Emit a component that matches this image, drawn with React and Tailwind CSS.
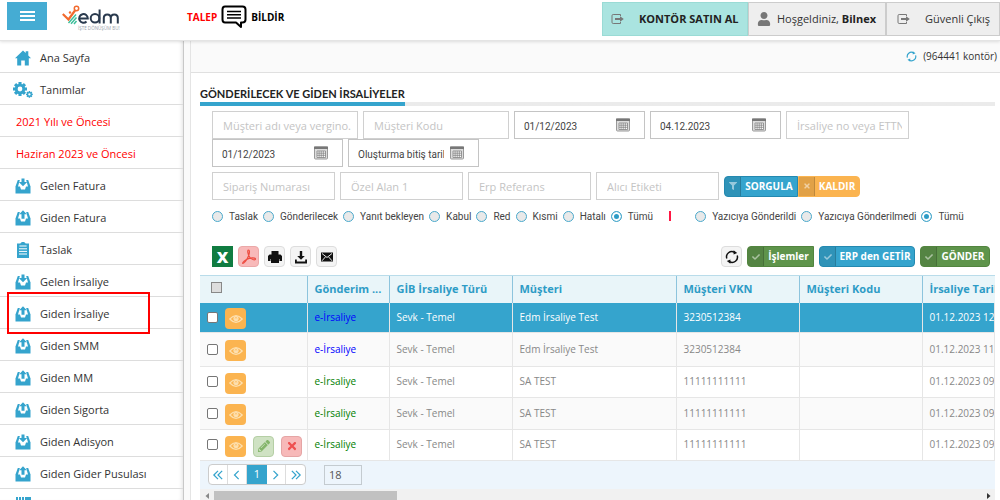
import { useState } from 'react';
import clsx from 'clsx';
import { FaPencilAlt, FaFilter, FaUser, FaCheck, FaTimes } from 'react-icons/fa';

const HomeIcon = () => (
  <svg viewBox="0 0 16 16" className="size-4" fill="#35a4cd">
    <path d="M8 0.5 0 8.2h2.2V15.5h4V10.5h3.6v5h4V8.2H16L13.3 5.6V1.2h-2.6v1.9z" />
  </svg>
);

const Gear = ({ cx, cy, r }) => (
  <g transform={`translate(${cx} ${cy})`}>
    {[0, 45, 90, 135].map((a) => (
      <rect key={a} x={-r * 0.22} y={-r} width={r * 0.44} height={r * 2} transform={`rotate(${a})`} />
    ))}
    <circle r={r * 0.74} />
    <circle r={r * 0.34} fill="#fff" />
  </g>
);

const GearsIcon = () => (
  <svg viewBox="0 0 20 16" className="h-4 w-5" fill="#35a4cd">
    <Gear cx={7} cy={7} r={7} />
    <Gear cx={16.4} cy={12.4} r={3.4} />
  </svg>
);

const TrayIcon = ({ up }) => (
  <svg viewBox="0 0 16 16" className="size-4">
    <path d="M2.8 2h10.400L15.500 8.500v7H.5v-7z" fill="#35a4cd" />
    <path d="M5 1.500h6L13 8.500h-2L10 11.500H6L5 8.500H3z" fill="#fff" />
    {up ? (
      <path d="M8 .2 11.800 4.200H9.500v4.500h-3V4.200H4.200z" fill="#35a4cd" />
    ) : (
      <path d="M6.500.5h3v3.500h2.700L8 8.300 3.800 4h2.700z" fill="#35a4cd" />
    )}
  </svg>
);

const ClipboardIcon = () => (
  <svg viewBox="0 0 16 16" className="size-4">
    <path d="M2 1.6h3.4C5.6.6 6.6 0 8 0s2.4.6 2.6 1.6H14V16H2z" fill="#35a4cd" />
    <path d="M4.4 4h7.2M4 6.8h8M4 9.4h8M4 12h8" stroke="#fff" strokeWidth="1" />
  </svg>
);

const BarcodeIcon = () => (
  <svg viewBox="0 0 16 16" className="size-4">
    <path d="M1 1.5h10" stroke="#35a4cd" strokeWidth="3" strokeDasharray="2 1" />
    <path d="M11 0h5v15H1V8h10z" fill="#35a4cd" />
  </svg>
);

const CalendarIcon = () => (
  <svg viewBox="0 0 14 14" className="size-3.5">
    <rect x="0.5" y="1" width="13" height="12" rx="1" fill="#ddd" stroke="#999" />
    <rect x="0" y="0.5" width="14" height="2.5" fill="#777" />
    <path d="M3 5h8.5v6.5H3zM3 7.2h8.5M3 9.3h8.5M5.1 5v6.5M7.2 5v6.5M9.3 5v6.5" fill="#fff" stroke="#777" strokeWidth="0.7" />
  </svg>
);

const ExitIcon = () => (
  <svg viewBox="0 0 14 12" className="h-3 w-3.5" fill="none" stroke="#777">
    <path d="M9.5 3V1.5H2.2Q1 1.5 1 2.7v6.6q0 1.2 1.2 1.2h7.3V9" />
    <path d="M4 5h5V3.2L12.8 6 9 8.8V7H4z" fill="#777" stroke="none" />
  </svg>
);

const RefreshIcon = ({ className }) => (
  <svg viewBox="0 0 14 14" className={className} fill="none" stroke="currentColor" strokeWidth="1.5">
    <path d="M1.8 8.5A5.3 5.3 0 0 1 9.5 2.3M12.2 5.5a5.3 5.3 0 0 1-7.7 6.2" />
    <path d="M8.6.2 12.2 3 8.6 4.6zM5.4 13.8 1.8 11l3.6-1.6z" fill="currentColor" stroke="none" />
  </svg>
);

const EyeIcon = () => (
  <svg viewBox="0 0 14 10" className="h-2.5 w-3.5" fill="none" stroke="#fde0b0">
    <path d="M.8 5Q7-1.8 13.2 5 7 11.8.8 5z" strokeWidth="1.2" />
    <circle cx="7" cy="4.6" r="2.6" fill="#fde0b0" stroke="none" />
    <path d="M5.8 4.4Q7 2.4 8.2 4.4" stroke="#fbb450" strokeWidth="0.8" />
  </svg>
);

const PdfIcon = () => (
  <svg viewBox="0 0 16 16" className="size-4" fill="none" stroke="#ee4b3f" strokeWidth="1.2">
    <path d="M7.5 1C6 1 7 6 9 8.5s5.5 3 5.5 1.5S9 8.5 5.5 10.5 1 14.5 2 14.5 6 11 7.5 7 8.5 1 7.5 1z" />
  </svg>
);

const PrinterIcon = () => (
  <svg viewBox="0 0 14 12" className="h-3 w-3.5" fill="currentColor">
    <path d="M3.5 0h7v4h-7z" />
    <path d="M1.5 3.5h11L14 5v5h-2.5V8h-9v2H0V5z" />
    <path d="M3 8h8v4H3z" />
  </svg>
);

const DownloadIcon = () => (
  <svg viewBox="0 0 14 14" className="size-3.5" fill="currentColor">
    <path d="M5.8 1h2.4v5h2.6L7 9.8 3.2 6h2.6zM1 9.5h1.8v2h8.4v-2H13v4H1z" />
  </svg>
);

const MailIcon = () => (
  <svg viewBox="0 0 14 10" className="h-2.5 w-3.5">
    <rect x="1" y="0.5" width="12" height="9" fill="#111" />
    <path d="m2 1.5 5 4 5-4M2 8.8l3.5-4M12 8.8l-3.5-4" fill="none" stroke="#fff" strokeWidth="0.9" />
  </svg>
);

const Logo = () => (
  <svg viewBox="0 0 60 27" className="h-[27px] w-[60px]">
    <path d="M.8 10 6.5 15.5 13 6.5" fill="none" stroke="#f26a2e" strokeWidth="2.2" />
    <circle cx="14.5" cy="4.5" r="2.2" fill="#fff" stroke="#f26a2e" strokeWidth="1.5" />
    <circle cx="8" cy="8.5" r="1.2" fill="#f26a2e" />
    <path d="m6.5 19 7.5-8.5M9 19.8l5.5-6.3M12 20l2.5-3" stroke="#3fbf9b" strokeWidth="1.5" />
    <g fill="none" stroke="#2a3a4e" strokeWidth="2">
      <path d="M17.5 14.5h8.3a4.3 4.3 0 1 0-1.3 3" />
      <circle cx="33" cy="14.3" r="4.3" />
      <path d="M37.6 5.5v14M41.8 19.5v-5.4q0-3.6 3.5-3.6t3.5 3.6v5.4M48.8 14.1q0-3.6 3.5-3.6t3.5 3.6v5.4" />
    </g>
    <text x="16" y="25.5" fontSize="4.5" fill="#9aa3ad" fontFamily="Open Sans, sans-serif">İŞTE DÖNÜŞÜM BU!</text>
  </svg>
);

const menu = [
  { label: 'Ana Sayfa', icon: <HomeIcon /> },
  { label: 'Tanımlar', icon: <GearsIcon /> },
  { label: '2021 Yılı ve Öncesi' },
  { label: 'Haziran 2023 ve Öncesi' },
  { label: 'Gelen Fatura', icon: <TrayIcon /> },
  { label: 'Giden Fatura', icon: <TrayIcon up /> },
  { label: 'Taslak', icon: <ClipboardIcon /> },
  { label: 'Gelen İrsaliye', icon: <TrayIcon /> },
  { label: 'Giden İrsaliye', icon: <TrayIcon up />, marked: true },
  { label: 'Giden SMM', icon: <TrayIcon up /> },
  { label: 'Giden MM', icon: <TrayIcon up /> },
  { label: 'Giden Sigorta', icon: <TrayIcon up /> },
  { label: 'Giden Adisyon', icon: <TrayIcon /> },
  { label: 'Giden Gider Pusulası', icon: <TrayIcon up /> },
];

const columns = ['Gönderim ...', 'GİB İrsaliye Türü', 'Müşteri', 'Müşteri VKN', 'Müşteri Kodu', 'İrsaliye Tarihi'];

const rows = [
  { color: 'text-[#0000ff]', customer: 'Edm İrsaliye Test', vkn: '3230512384', date: '01.12.2023 12:05', height: 'h-[29px]' },
  { color: 'text-[#0000ff]', customer: 'Edm İrsaliye Test', vkn: '3230512384', date: '01.12.2023 11:48', height: 'h-[34px]' },
  { color: 'text-[#008000]', customer: 'SA TEST', vkn: '11111111111', date: '01.12.2023 09:30', height: 'h-[31px]' },
  { color: 'text-[#008000]', customer: 'SA TEST', vkn: '11111111111', date: '01.12.2023 09:28', height: 'h-[32px]' },
  { color: 'text-[#008000]', customer: 'SA TEST', vkn: '11111111111', date: '01.12.2023 09:21', height: 'h-[31px]', editable: true },
];

const pages = [
  { label: 'İlk', path: 'M7 1 2 6l5 5M12 1 7 6l5 5' },
  { label: 'Önceki', path: 'M9 1 4 6l5 5' },
  { label: '1' },
  { label: 'Sonraki', path: 'M4 1l5 5-5 5' },
  { label: 'Son', path: 'M2 1l5 5-5 5M7 1l5 5-5 5' },
];

const Field = ({ label, className }) => (
  <input
    type="text"
    aria-label={label}
    placeholder={label}
    className={clsx('h-7 border border-[#d0d0d0] bg-white pr-1.5 pl-2.5 text-[11px] text-[#444] placeholder:text-[#c4c4c4]', className)}
  />
);

const DateField = ({ label, value }) => (
  <div className="flex h-7 w-[131px] items-center border border-[#c4c4c4] bg-white pr-3.5 pl-[9px] font-['Roboto',sans-serif]">
    <input type="text" aria-label={label} defaultValue={value} className="w-[86px] pt-0.5 text-[10px] text-[#444]" />
    <button type="button" aria-label={`${label} seç`} className="ml-auto">
      <CalendarIcon />
    </button>
  </div>
);

const RadioGroup = ({ name, options }) => {
  const [selected, setSelected] = useState('Tümü');
  return (
    <div className="flex items-center gap-[5px]">
      {options.map((o) => (
        <label key={o} className="flex items-center gap-1.5 whitespace-nowrap">
          <input
            type="radio"
            name={name}
            checked={selected === o}
            onChange={() => setSelected(o)}
            className="size-[11px] shrink-0 appearance-none rounded-full border border-[#4aa9cc] bg-[#e9e9e9] checked:bg-[#2e9cc6] checked:shadow-[inset_0_0_0_2px_#fff]"
          />
          {o}
        </label>
      ))}
    </div>
  );
};

const ActionButton = ({ icon, children, className }) => (
  <button
    type="button"
    className={clsx('flex h-[21px] items-stretch overflow-hidden border text-[10px] font-bold whitespace-nowrap text-white', className)}
  >
    <span className="flex w-4 items-center justify-center border-r border-black/15 bg-black/10 text-[8px] text-white/50">{icon}</span>
    <span className="flex flex-1 items-center justify-center">{children}</span>
  </button>
);

const ToolButton = ({ label, className, children }) => (
  <button
    type="button"
    aria-label={label}
    className={clsx('flex size-[21px] items-center justify-center', className || 'rounded border border-[#ddd] bg-[#f4f4f4] text-[#111]')}
  >
    {children}
  </button>
);

const Header = () => (
  <header className="relative z-10 flex h-[41px] shrink-0 items-start border-b border-[#e4e4e4] bg-white pt-0.5 pl-[7px] text-[11px] shadow-[0_1px_3px_rgba(0,0,0,0.12)]">
    <button type="button" aria-label="Menü" className="flex h-7 w-10 flex-col items-center justify-center gap-0.5 bg-[#45acd3]">
      <span className="h-0.5 w-[15px] bg-white" />
      <span className="h-0.5 w-[15px] bg-white" />
      <span className="h-0.5 w-[15px] bg-white" />
    </button>
    <div className="mt-0.5 ml-[15px]">
      <Logo />
    </div>
    <a href="#" className="ml-[65px] flex h-[30px] items-center gap-1 text-[10px] font-bold">
      <span className="text-[#ff0000]">TALEP</span>
      <svg viewBox="0 0 26 24" className="h-6 w-[26px]" fill="none" stroke="#000" strokeWidth="2">
        <path d="M4 1.5h17.5q3 0 3 3v10q0 3-3 3H20V22l-5-4.5H4q-2.5 0-2.5-3v-10q0-3 2.5-3z" strokeLinejoin="round" />
        <path d="M6 6.5h14M6 9.8h14M6 13h14" strokeWidth="1.5" />
      </svg>
      <span className="text-black">BİLDİR</span>
    </a>
    <nav className="ml-auto flex h-[34px] text-[#333]">
      <a href="#" className="flex w-[146px] items-center border border-[#9adbd5] bg-[#aae4e0] pl-2">
        <ExitIcon />
        <span className="ml-3.5 font-bold text-[#222]">KONTÖR SATIN AL</span>
      </a>
      <a href="#" className="flex w-[138px] items-center gap-1.5 border border-[#ccc] bg-[#eee] pl-2">
        <FaUser className="size-3.5 text-[#777]" />
        <span>
          Hoşgeldiniz, <b className="text-[#222]">Bilnex</b>
        </span>
      </a>
      <a href="#" className="flex w-[114px] items-center border border-[#ccc] bg-[#eee] pl-2.5">
        <ExitIcon />
        <span className="ml-3.5">Güvenli Çıkış</span>
      </a>
    </nav>
  </header>
);

const Sidebar = () => (
  <aside className="w-[184px] shrink-0 overflow-hidden border-r border-[#c8c8c8] bg-white shadow-[inset_-4px_0_4px_-3px_rgba(0,0,0,0.12)]">
    <ul>
      {menu.map((m) => (
        <li key={m.label} className="relative h-8 border-b border-[#ddd]">
          <a href="#" className={clsx('flex h-full items-center pt-[3px] text-[11px]', m.icon ? 'text-[#333]' : 'pl-4 text-[#ff0000]')}>
            {m.icon && <span className="flex w-10 justify-center pl-1.5">{m.icon}</span>}
            {m.label}
          </a>
          {m.marked && <span className="pointer-events-none absolute -top-[5px] left-[7px] h-[42px] w-[143px] border-2 border-[#f00]" />}
        </li>
      ))}
      <li className="flex h-8 w-10 items-center justify-center pl-1.5">
        <BarcodeIcon />
      </li>
    </ul>
  </aside>
);

const InvoiceTable = () => (
  <div className="overflow-hidden border-t border-[#b9dcea]">
    <table className="w-full min-w-[795px] table-fixed border-collapse text-left text-[10px]">
      <colgroup>
        <col className="w-[107px]" />
        <col className="w-[82px]" />
        <col className="w-[123px]" />
        <col className="w-[164px]" />
        <col className="w-[123px]" />
        <col className="w-[123px]" />
        <col />
      </colgroup>
      <thead>
        <tr className="h-[27px] bg-[#e9f5f9] text-[11px] text-[#2e9cc6]">
          <th className="border-r border-[#8cc4dd] pl-[11px]">
            <input type="checkbox" aria-label="Tümünü seç" className="mb-1 block size-[11px] appearance-none border border-[#888] bg-[#ddd]" />
          </th>
          {columns.map((h) => (
            <th key={h} className="overflow-hidden border-r border-[#8cc4dd] pl-[7px] font-bold whitespace-nowrap last:border-r-0">
              {h}
            </th>
          ))}
        </tr>
      </thead>
      <tbody>
        {rows.map((r, i) => (
          <tr
            key={i}
            className={clsx(
              r.height,
              'border-b border-[#e6e6e6] [&>td]:overflow-hidden [&>td]:border-r [&>td]:border-[#e6e6e6] [&>td]:pl-[7px] [&>td]:whitespace-nowrap',
              i === 0 ? 'bg-[#35a4cd] text-white' : i % 2 ? 'bg-[#fafafa] text-[#888]' : 'bg-white text-[#888]'
            )}
          >
            <td>
              <div className="flex items-center gap-[7px]">
                <input type="checkbox" aria-label={`Satır ${i + 1}`} className="size-[11px] appearance-none rounded-xs border border-[#767676] bg-white" />
                <div className="flex gap-[7px] pt-[3px]">
                  <button type="button" aria-label="Görüntüle" className="flex size-[21px] items-center justify-center rounded bg-[#fbb450]">
                    <EyeIcon />
                  </button>
                  {r.editable && (
                    <>
                      <button
                        type="button"
                        aria-label="Düzenle"
                        className="flex size-[21px] items-center justify-center rounded border border-[#b5cfa5] bg-[#cfe2c3] text-[#84b56a]"
                      >
                        <FaPencilAlt className="size-3" />
                      </button>
                      <button
                        type="button"
                        aria-label="Sil"
                        className="flex size-[21px] items-center justify-center rounded border border-[#e5a5a5] bg-[#f7b9b9] text-[#ee5050]"
                      >
                        <FaTimes className="size-3" />
                      </button>
                    </>
                  )}
                </div>
              </div>
            </td>
            <td className={r.color}>e-İrsaliye</td>
            <td>Sevk - Temel</td>
            <td>{r.customer}</td>
            <td>{r.vkn}</td>
            <td></td>
            <td>{r.date}</td>
          </tr>
        ))}
      </tbody>
    </table>
    <div className="flex h-7 items-center bg-[#edf5fc] pl-2">
      <div className="flex h-[21px] overflow-hidden rounded border border-[#ccc] bg-white text-[11px]">
        {pages.map((p) =>
          p.path ? (
            <button key={p.label} type="button" aria-label={p.label} className="flex w-[19px] items-center justify-center border-r border-[#ddd] last:border-r-0">
              <svg viewBox="0 0 14 12" className="h-2.5 w-3" fill="none" stroke="#35a4cd" strokeWidth="1.5">
                <path d={p.path} />
              </svg>
            </button>
          ) : (
            <button key={p.label} type="button" className="w-5 bg-[#35a4cd] text-white">
              {p.label}
            </button>
          )
        )}
      </div>
      <input
        type="text"
        aria-label="Sayfa boyutu"
        defaultValue="18"
        className="ml-[18px] h-5 w-[38px] border border-[#c4cbd0] bg-[#edf5fc] px-1 text-[11px] text-[#555]"
      />
    </div>
    <div className="flex h-4 items-start bg-[#f1f1f1]">
      <svg viewBox="0 0 14 12" className="mt-px h-3 w-3.5" fill="#888">
        <path d="M9 3v6L5.5 6z" />
      </svg>
      <div className="mt-0.5 h-3 w-[23%] bg-[#c1c1c1]" />
      <svg viewBox="0 0 14 12" className="mt-px ml-auto h-3 w-3.5" fill="#333">
        <path d="M6 3v6l3.5-3z" />
      </svg>
    </div>
  </div>
);

const App = () => (
  <div className="flex h-screen flex-col overflow-hidden bg-[#fafafa] font-['Open_Sans',sans-serif]">
    <Header />
    <div className="flex min-h-0 flex-1 gap-1.5">
      <Sidebar />
      <main className="min-w-0 flex-1 overflow-hidden border-l border-[#e4e4e4] bg-white">
        <div className="flex h-8 items-center justify-end gap-1.5 border-b border-[#e0e0e0] bg-[#fafafa] pr-[3px] text-[10px] text-[#333]">
          <RefreshIcon className="size-[11px] text-[#35a4cd]" />
          (964441 kontör)
        </div>
        <div className="pr-[5px] pl-[9px]">
          {/* page title, its blue bar lies on the grey rule */}
          <div className="mt-3 flex h-[21px] bg-linear-to-t from-[#ebebeb] from-[4px] to-transparent to-[4px]">
            <h1 className="border-b-4 border-[#35a4cd] font-['Lato','Open_Sans',sans-serif] text-[11px] leading-[18px] font-bold text-[#222]">
              GÖNDERİLECEK VE GİDEN İRSALİYELER
            </h1>
          </div>

          <form className="pt-[5px] pl-3 text-[10px] text-[#444]">
            <div className="flex gap-[5px]">
              <Field label="Müşteri adı veya vergino." className="w-[146px]" />
              <Field label="Müşteri Kodu" className="w-[146px]" />
              <DateField label="Başlangıç tarihi" value="01/12/2023" />
              <DateField label="Bitiş tarihi" value="04.12.2023" />
              <Field label="İrsaliye no veya ETTN" className="w-[123px]" />
            </div>
            <div className="flex gap-[5px]">
              <DateField label="Oluşturma başlangıç tarihi" value="01/12/2023" />
              <DateField label="Oluşturma bitiş tarihi" value="Oluşturma bitiş tarihi" />
            </div>
            <div className="mt-[5px] flex items-center gap-[5px]">
              <Field label="Sipariş Numarası" className="w-[123px]" />
              <Field label="Özel Alan 1" className="w-[123px]" />
              <Field label="Erp Referans" className="w-[123px]" />
              <Field label="Alıcı Etiketi" className="w-[123px]" />
              <div className="flex">
                <ActionButton icon={<FaFilter />} className="w-[74px] rounded-l border-[#2489b0] bg-[#35a4cd]">
                  SORGULA
                </ActionButton>
                <ActionButton icon={<FaTimes />} className="w-[62px] rounded-r border-[#fbb450] bg-[#fbb450]">
                  KALDIR
                </ActionButton>
              </div>
            </div>
            <div className="mt-2 flex h-4 items-center font-['Roboto',sans-serif]">
              <RadioGroup name="durum" options={['Taslak', 'Gönderilecek', 'Yanıt bekleyen', 'Kabul', 'Red', 'Kısmi', 'Hatalı', 'Tümü']} />
              <span className="ml-4 h-2.5 w-0.5 bg-[#ff1744]" />
              <div className="ml-6">
                <RadioGroup name="yazici" options={['Yazıcıya Gönderildi', 'Yazıcıya Gönderilmedi', 'Tümü']} />
              </div>
            </div>
          </form>

          <div className="mt-[22px] mb-2 flex items-center gap-[5px] pr-[5px] pl-3">
            <ToolButton label="Excel" className="bg-[#107c41] text-[16px] font-extrabold text-white">
              X
            </ToolButton>
            <ToolButton label="PDF" className="rounded border border-[#eba8a8] bg-[#f8b9b9]">
              <PdfIcon />
            </ToolButton>
            <ToolButton label="Yazdır">
              <PrinterIcon />
            </ToolButton>
            <ToolButton label="İndir">
              <DownloadIcon />
            </ToolButton>
            <ToolButton label="E-posta">
              <MailIcon />
            </ToolButton>
            <div className="ml-auto flex gap-[5px]">
              <ToolButton label="Yenile">
                <RefreshIcon className="size-3.5" />
              </ToolButton>
              <ActionButton icon={<FaCheck />} className="w-[67px] rounded-l border-[#52853f] bg-[#5e944b]">
                İşlemler
              </ActionButton>
              <ActionButton icon={<FaCheck />} className="w-24 rounded border-[#2489b0] bg-[#35a4cd]">
                ERP den GETİR
              </ActionButton>
              <ActionButton icon={<FaCheck />} className="w-[70px] rounded border-[#52853f] bg-[#5e944b]">
                GÖNDER
              </ActionButton>
            </div>
          </div>

          <InvoiceTable />
        </div>
      </main>
    </div>
  </div>
);

export default App;
